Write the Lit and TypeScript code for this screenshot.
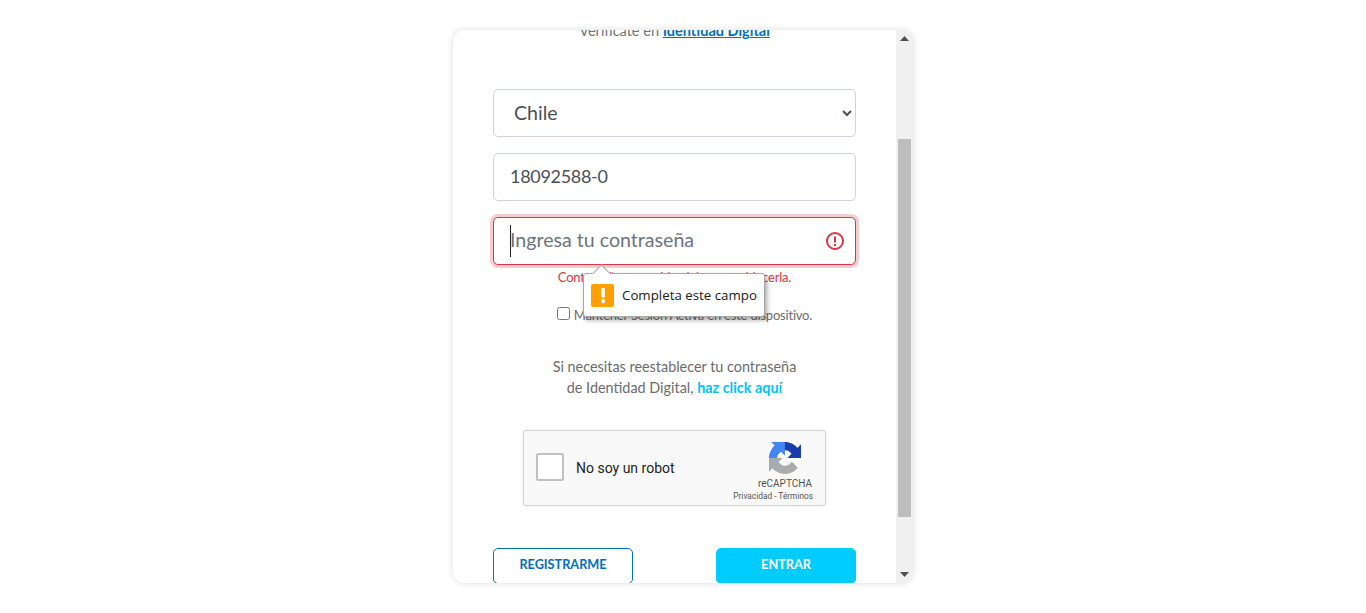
import { LitElement, html, css } from 'lit'
import { customElement } from 'lit/decorators.js'

@customElement('app-root')
export class AppRoot extends LitElement {
	static styles = css`
		:host {
			display: block;
			height: 613px;
			background: #fff;
			font-family: 'Lato', 'Noto Sans', sans-serif;
			color: #6c6c6c;
			overflow: hidden;
		}
		.page {
			display: flex;
			justify-content: center;
			padding-top: 30px;
		}
		.card {
			width: 460px;
			height: 553px;
			display: flex;
			border-radius: 12px;
			background: #fff;
			box-shadow: 0 0 7px rgba(0, 0, 0, 0.14);
			overflow: hidden;
		}
		.content {
			flex: 1;
			min-width: 0;
			padding: 0 40px;
			overflow: hidden;
		}
		.verify {
			margin-top: -8px;
			height: 18px;
			line-height: 18px;
			font-size: 14.5px;
			text-align: center;
			color: #6c757d;
		}
		.verify a {
			color: #0070ba;
			font-weight: 700;
			text-decoration: underline;
		}
		.fields {
			display: flex;
			flex-direction: column;
			gap: 16px;
			margin-top: 49px;
		}
		.control {
			box-sizing: border-box;
			display: block;
			width: 100%;
			height: 48px;
			padding: 0 16px 3px;
			border: 1px solid #ced4da;
			border-radius: 5px;
			background: #fff;
			font: inherit;
			font-size: 19.6px;
			color: #495057;
			outline: none;
		}
		select.control {
			padding-bottom: 2px;
		}
		.rut {
			font-size: 18px;
			letter-spacing: -0.3px;
		}
		.control::placeholder {
			color: #6c757d;
			opacity: 1;
		}
		.password {
			position: relative;
		}
		.password .control {
			border-color: #dc3545;
			box-shadow: 0 0 0 3px rgba(220, 53, 69, 0.25);
		}
		.caret {
			position: absolute;
			left: 17px;
			top: 8px;
			width: 1px;
			height: 32px;
			background: #222;
		}
		.alert-icon {
			position: absolute;
			right: 11px;
			top: 14px;
			width: 20px;
			height: 20px;
		}
		.bubble {
			position: absolute;
			left: 90px;
			top: 56px;
			z-index: 2;
			box-sizing: border-box;
			width: 182px;
			height: 44px;
			display: flex;
			align-items: center;
			gap: 8px;
			padding: 0 7px;
			background: #fff;
			border: 1px solid #a8a8a8;
			border-radius: 3px;
			box-shadow: 2px 3px 5px rgba(0, 0, 0, 0.35);
			font-family: 'Open Sans', sans-serif;
			font-size: 13.3px;
			color: #202020;
			white-space: nowrap;
		}
		.bubble::before {
			content: '';
			position: absolute;
			left: 11px;
			top: -7px;
			width: 12px;
			height: 12px;
			background: #fff;
			border-left: 1px solid #a8a8a8;
			border-top: 1px solid #a8a8a8;
			transform: rotate(45deg);
		}
		.warn {
			width: 23px;
			height: 23px;
			flex: none;
			border-radius: 2px;
			background: #ffa000;
			display: flex;
			align-items: center;
			justify-content: center;
		}
		.error {
			margin-top: 3px;
			height: 18px;
			line-height: 18px;
			font-size: 13px;
			letter-spacing: -0.2px;
			text-align: center;
			color: #dc3545;
		}
		.keep {
			margin-top: 19px;
			padding-left: 20px;
			display: flex;
			justify-content: center;
			align-items: center;
			gap: 4px;
			height: 20px;
			font-size: 13px;
			letter-spacing: -0.2px;
			color: #6c6c6c;
		}
		.keep input {
			margin: 0 0 4px;
			width: 13px;
			height: 13px;
		}
		.help {
			margin-top: 31px;
			font-size: 14.4px;
			line-height: 21px;
			text-align: center;
			color: #6c6c6c;
		}
		.help a {
			color: #00c3ff;
			font-weight: 700;
			text-decoration: none;
		}
		.captcha {
			box-sizing: border-box;
			width: 303px;
			height: 76px;
			margin: 32px auto 0;
			padding: 0 12px;
			display: flex;
			align-items: center;
			background: #f9f9f9;
			border: 1px solid #d3d3d3;
			border-radius: 3px;
			box-shadow: 0 0 4px rgba(0, 0, 0, 0.08);
			font-family: 'Roboto', sans-serif;
			color: #000;
		}
		.captcha-box {
			box-sizing: border-box;
			width: 28px;
			height: 28px;
			margin-bottom: 2px;
			background: #fff;
			border: 2px solid #c1c1c1;
			border-radius: 2px;
		}
		.captcha-label {
			flex: 1;
			margin-left: 12px;
			font-size: 14px;
			color: #222;
		}
		.captcha-brand {
			width: 56px;
			display: flex;
			flex-direction: column;
			align-items: center;
			padding-top: 8px;
			color: #555;
		}
		.captcha-brand svg {
			width: 32px;
			height: 32px;
		}
		.captcha-name {
			margin-top: 4px;
			font-size: 10px;
			line-height: 12px;
		}
		.captcha-links {
			align-self: flex-end;
			font-size: 8.3px;
			line-height: 12px;
			white-space: nowrap;
		}
		.actions {
			display: flex;
			justify-content: space-between;
			margin-top: 42px;
		}
		.btn {
			box-sizing: border-box;
			width: 140px;
			height: 36px;
			padding: 0 0 4px;
			border-radius: 5px;
			font: inherit;
			font-size: 12.7px;
			font-weight: 700;
		}
		.btn-outline {
			background: #fff;
			border: 1px solid #0070ba;
			color: #0070ba;
		}
		.btn-fill {
			background: #00ccff;
			border: 1px solid #00ccff;
			color: #fff;
		}
		.scrollbar {
			width: 17px;
			flex: none;
			display: flex;
			flex-direction: column;
			background: #f0f0f0;
		}
		.arrow {
			height: 17px;
			flex: none;
			display: flex;
			align-items: center;
			justify-content: center;
		}
		.track {
			flex: 1;
			padding: 92px 2px 49px;
			min-height: 0;
		}
		.thumb {
			height: 100%;
			background: #bdbdbd;
		}
	`

	render() {
		return html`
			<div class="page">
				<div class="card">
					<div class="content">
						<div class="verify">Verifícate en <a href="#">Identidad Digital</a></div>
						<div class="fields">
							<select class="control">
								<option>Chile</option>
							</select>
							<input class="control rut" value="18092588-0" />
							<div class="password">
								<input class="control" type="password" placeholder="Ingresa tu contraseña" />
								<span class="caret"></span>
								<svg class="alert-icon" viewBox="0 0 20 20" fill="none">
									<circle cx="10" cy="10" r="8" stroke="#dc3545" stroke-width="2" />
									<path d="M10 5.5v6" stroke="#dc3545" stroke-width="2" />
									<circle cx="10" cy="14" r="1.2" fill="#dc3545" />
								</svg>
								<div class="bubble">
									<span class="warn">
										<svg width="6" height="15" viewBox="0 0 6 15">
											<path d="M1.200 0h3.600v9.500H1.200zM1.200 11.200h3.600V15H1.200z" fill="#fff" />
										</svg>
									</span>
									Completa este campo
								</div>
							</div>
						</div>
						<div class="error">Contraseña requerida, debes restablecerla.</div>
						<label class="keep">
							<input type="checkbox" />
							Mantener Sesión Activa en este dispositivo.
						</label>
						<div class="help">
							Si necesitas reestablecer tu contraseña<br />
							de Identidad Digital, <a href="#">haz click aquí</a>
						</div>
						<div class="captcha">
							<span class="captcha-box"></span>
							<span class="captcha-label">No soy un robot</span>
							<div class="captcha-brand">
								<svg viewBox="0 0 64 64">
									<path d="M64 31.955l-.033-1.37V4.687l-7.16 7.16C50.948 4.674 42.033.093 32.05.093c-10.4 0-19.622 4.96-25.458 12.64l11.736 11.86a15.55 15.55 0 0 1 4.754-5.334c2.05-1.6 4.952-2.906 8.968-2.906.485 0 .86.057 1.135.163 4.976.393 9.288 3.14 11.828 7.124l-8.307 8.307L64 31.953" fill="#1c3aa9" />
									<path d="M31.862.094l-1.37.033H4.594l7.16 7.16C4.58 13.147 0 22.06 0 32.046c0 10.4 4.96 19.622 12.64 25.458L24.5 45.768a15.55 15.55 0 0 1-5.334-4.754c-1.6-2.05-2.906-4.952-2.906-8.968 0-.485.057-.86.163-1.135.393-4.976 3.14-9.288 7.124-11.828l8.307 8.307L31.86.095" fill="#4285f4" />
									<path d="M.001 32.045l.033 1.37v25.898l7.16-7.16c5.86 7.173 14.774 11.754 24.76 11.754 10.4 0 19.622-4.96 25.458-12.64l-11.736-11.86a15.55 15.55 0 0 1-4.754 5.334c-2.05 1.6-4.952 2.906-8.968 2.906-.485 0-.86-.057-1.135-.163-4.976-.393-9.288-3.14-11.828-7.124l8.307-8.307c-10.522.04-22.4.066-28.303-.009" fill="#ababab" />
								</svg>
								<span class="captcha-name">reCAPTCHA</span>
								<span class="captcha-links">Privacidad - Términos</span>
							</div>
						</div>
						<div class="actions">
							<button class="btn btn-outline">REGISTRARME</button>
							<button class="btn btn-fill">ENTRAR</button>
						</div>
					</div>
					<div class="scrollbar">
						<div class="arrow">
							<svg width="9" height="5" viewBox="0 0 9 5"><path d="M4.500 0 9 5H0z" fill="#505050" /></svg>
						</div>
						<div class="track"><div class="thumb"></div></div>
						<div class="arrow">
							<svg width="9" height="5" viewBox="0 0 9 5"><path d="M0 0h9L4.500 5z" fill="#505050" /></svg>
						</div>
					</div>
				</div>
			</div>
		`
	}
}
